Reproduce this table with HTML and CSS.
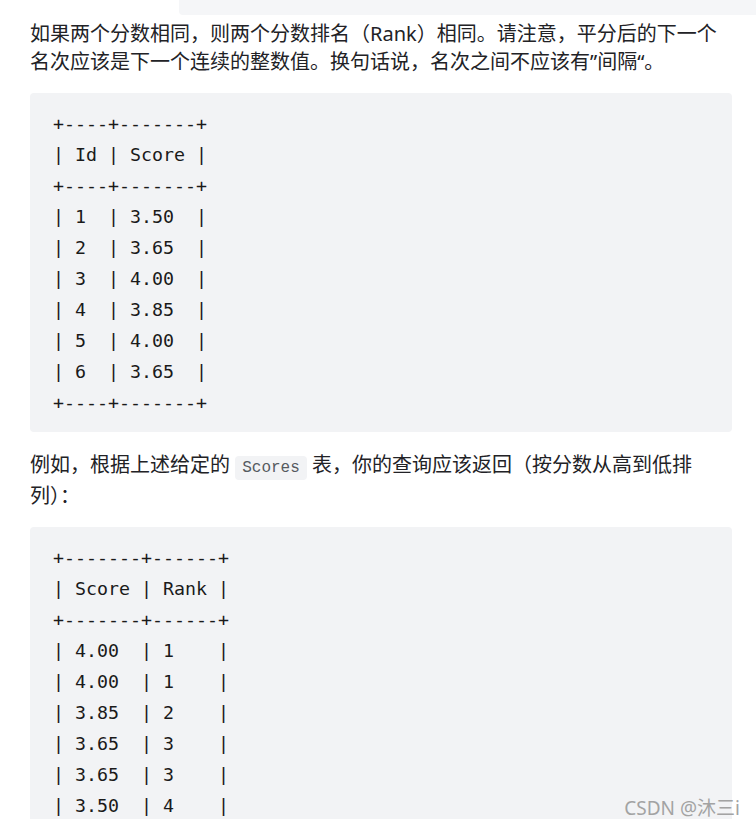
FILE: index.html
```html
<!DOCTYPE html>
<html lang="zh-CN">
<head>
<meta charset="utf-8">
<title>Rank Scores</title>
<link rel="stylesheet" href="styles.css">
</head>
<body>
<div class="page">
  <div class="prev-block"></div>
  <article class="content">
    <p class="para para-first">如果两个分数相同，则两个分数排名（Rank）相同。请注意，平分后的下一个<br>名次应该是下一个连续的整数值。换句话说，名次之间不应该有”间隔“。</p>
<pre class="code">+----+-------+
| Id | Score |
+----+-------+
| 1  | 3.50  |
| 2  | 3.65  |
| 3  | 4.00  |
| 4  | 3.85  |
| 5  | 4.00  |
| 6  | 3.65  |
+----+-------+</pre>
    <p class="para para-second">例如，根据上述给定的 <code class="inline-code">Scores</code> 表，你的查询应该返回（按分数从高到低排<br>列）：</p>
<pre class="code">+-------+------+
| Score | Rank |
+-------+------+
| 4.00  | 1    |
| 4.00  | 1    |
| 3.85  | 2    |
| 3.65  | 3    |
| 3.65  | 3    |
| 3.50  | 4    |
+-------+------+</pre>
  </article>
  <div class="watermark">CSDN @沐三i</div>
</div>
</body>
</html>
```

FILE: styles.css
```css
html, body {
  margin: 0;
  padding: 0;
  background: #ffffff;
}

.page {
  position: relative;
  width: 756px;
  height: 819px;
  overflow: hidden;
  background: #ffffff;
}

.prev-block {
  height: 15px;
  margin-left: 179px;
  background: #f5f6f8;
  border-bottom-left-radius: 4px;
}

.content {
  padding: 0 24px 0 30px;
}

.para {
  margin: 0;
  font-family: "Noto Sans", "Noto Sans CJK SC", sans-serif;
  font-size: 20px;
  line-height: 28px;
  color: #222226;
}

.para-first {
  margin-top: 5px;
}

.para-second {
  margin-top: 19px;
}

.code {
  margin: 17px 0 0 0;
  padding: 15px 23px 14px;
  background: #f2f3f5;
  border-radius: 4px;
  font-family: "DejaVu Sans Mono", "Liberation Mono", monospace;
  font-size: 18.3px;
  line-height: 31px;
  color: #1a1a1a;
  white-space: pre;
}

.inline-code {
  font-family: "Liberation Mono", "DejaVu Sans Mono", monospace;
  font-size: 16px;
  color: #555a60;
  background: #f2f3f5;
  border-radius: 4px;
  padding: 3px 7px;
}

.watermark {
  position: absolute;
  right: 16px;
  top: 798px;
  font-family: "Noto Sans", "Noto Sans CJK SC", sans-serif;
  font-size: 19px;
  line-height: 20px;
  color: #a3a3a3;
}
```
